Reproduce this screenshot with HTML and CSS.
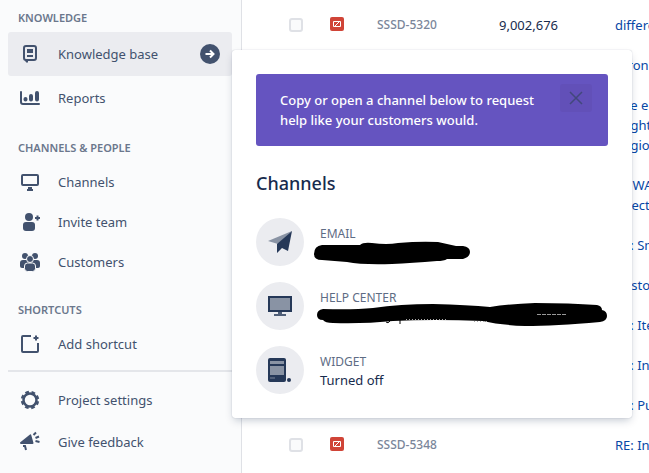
FILE: index.html
```html
<!DOCTYPE html>
<html lang="en">
<head>
    <meta charset="UTF-8">
    <meta name="viewport" content="width=device-width, initial-scale=1.0">
    <title>Channels</title>
    <link rel="stylesheet" href="styles.css">
</head>
<body>
    <div class="app">
        <nav class="sidebar">
            <h2 class="nav-title">Knowledge</h2>
            <ul class="nav-list nav-list-tall">
                <li>
                    <a class="nav-item selected" href="#">
                        <svg class="nav-icon" viewBox="0 0 24 24" fill="none" stroke="currentColor" stroke-width="2"><rect x="6" y="4" width="12" height="14" rx="2"/><path d="M9 7h6v4H9z" fill="currentColor" stroke="none"/><path d="M9 14h6"/><path d="M7 18h3v2l-1 1-2-2z" fill="currentColor" stroke="none"/></svg>
                        <span class="nav-label">Knowledge base</span>
                        <svg class="nav-arrow" viewBox="0 0 20 20"><circle cx="10" cy="10" r="10" fill="currentColor"/><path d="M5.500 10h8M10 6.500l3.500 3.500-3.500 3.500" fill="none" stroke="#fff" stroke-width="2"/></svg>
                    </a>
                </li>
                <li>
                    <a class="nav-item" href="#">
                        <svg class="nav-icon" viewBox="0 0 24 24" fill="none" stroke="currentColor" stroke-width="2" stroke-linecap="round"><path d="M3 6v10q0 2 2 2h16"/><path d="M7.500 13v.5M13 10v3.500M19 7v6.500" stroke-width="4"/></svg>
                        <span class="nav-label">Reports</span>
                    </a>
                </li>
            </ul>

            <h2 class="nav-title">Channels &amp; people</h2>
            <ul class="nav-list">
                <li>
                    <a class="nav-item" href="#">
                        <svg class="nav-icon" viewBox="0 0 24 24" fill="none" stroke="currentColor" stroke-width="2"><rect x="4" y="5" width="16" height="10" rx="1"/><path d="M12 17v3" stroke-width="4"/><path d="M9 20h6"/></svg>
                        <span class="nav-label">Channels</span>
                    </a>
                </li>
                <li>
                    <a class="nav-item" href="#">
                        <svg class="nav-icon" viewBox="0 0 24 24" fill="currentColor"><circle cx="11" cy="7" r="4"/><path d="M5 15q0-3 3-3h6q3 0 3 3v3q0 3-3 3H8q-3 0-3-3z"/><path d="M19.500 5.500v5M17 8h5" stroke="currentColor" stroke-width="2"/></svg>
                        <span class="nav-label">Invite team</span>
                    </a>
                </li>
                <li>
                    <a class="nav-item" href="#">
                        <svg class="nav-icon" viewBox="0 0 24 24" fill="currentColor"><circle cx="7" cy="6" r="3"/><circle cx="17" cy="6" r="3"/><path d="M2 13q0-3 3-3h14q3 0 3 3v3q0 2-2 2H4q-2 0-2-2z"/><g stroke="#fafbfc"><circle cx="12" cy="9" r="3.500"/><path d="M6.500 16q0-3 3-3h5q3 0 3 3v2.500q0 3-3 3h-5q-3 0-3-3z"/></g></svg>
                        <span class="nav-label">Customers</span>
                    </a>
                </li>
            </ul>

            <h2 class="nav-title">Shortcuts</h2>
            <ul class="nav-list">
                <li>
                    <a class="nav-item" href="#">
                        <svg class="nav-icon" viewBox="0 0 24 24" fill="none" stroke="currentColor" stroke-width="2"><path d="M13 4H5q-1 0-1 1v14q0 1 1 1h14q1 0 1-1v-8"/><path d="M18 3.500v5M15.500 6h5"/></svg>
                        <span class="nav-label">Add shortcut</span>
                    </a>
                </li>
            </ul>

            <ul class="nav-list nav-footer">
                <li>
                    <a class="nav-item" href="#">
                        <svg class="nav-icon" viewBox="0 0 24 24" fill="none" stroke="currentColor"><circle cx="12" cy="12" r="6.500" stroke-width="2.500"/><circle cx="12" cy="12" r="8" stroke-width="2.500" stroke-dasharray="3.600 2.683" stroke-dashoffset="-1.340"/></svg>
                        <span class="nav-label">Project settings</span>
                    </a>
                </li>
                <li>
                    <a class="nav-item" href="#">
                        <svg class="nav-icon" viewBox="0 0 24 24" fill="currentColor"><path d="M2 12.500 12 4.500q1-.5 1.300.7L15.500 13q0 1-1 1H3q-1 0-1-1.500z"/><path d="M5 16h2l1 4M15.500 5l2.500-2.500M17.500 8l3.500-1.500M17.500 11l4 1" fill="none" stroke="currentColor" stroke-width="2"/></svg>
                        <span class="nav-label">Give feedback</span>
                    </a>
                </li>
            </ul>
        </nav>

        <main class="queue">
            <table class="issues">
                <tbody>
                    <tr>
                        <td class="col-check"><input type="checkbox" aria-label="Select SSSD-5320"></td>
                        <td class="col-type"><svg class="type-icon" viewBox="0 0 14 14"><rect width="14" height="14" rx="2" fill="#d04437"/><path d="M3.500 4.500h7v5h-7zM5 9l4-4" fill="none" stroke="#fff"/></svg></td>
                        <td class="col-key">SSSD-5320</td>
                        <td class="col-number">9,002,676</td>
                        <td class="col-summary"><a href="#">differe</a></td>
                    </tr>
                    <tr><td colspan="4"></td><td class="col-summary"><a href="#">Erron</a></td></tr>
                    <tr><td colspan="4"></td><td class="col-summary"><a href="#">The e<br>might<br>Region</a></td></tr>
                    <tr><td colspan="4"></td><td class="col-summary"><a href="#">To WA<br>direct</a></td></tr>
                    <tr><td colspan="4"></td><td class="col-summary"><a href="#">RE: Sm</a></td></tr>
                    <tr><td colspan="4"></td><td class="col-summary"><a href="#">Custo</a></td></tr>
                    <tr><td colspan="4"></td><td class="col-summary"><a href="#">RE: Ite</a></td></tr>
                    <tr><td colspan="4"></td><td class="col-summary"><a href="#">RE: In</a></td></tr>
                    <tr><td colspan="4"></td><td class="col-summary"><a href="#">RE: Pu</a></td></tr>
                    <tr>
                        <td class="col-check"><input type="checkbox" aria-label="Select SSSD-5348"></td>
                        <td class="col-type"><svg class="type-icon" viewBox="0 0 14 14"><rect width="14" height="14" rx="2" fill="#d04437"/><path d="M3.500 4.500h7v5h-7zM5 9l4-4" fill="none" stroke="#fff"/></svg></td>
                        <td class="col-key">SSSD-5348</td>
                        <td class="col-number"></td>
                        <td class="col-summary"><a href="#">RE: In</a></td>
                    </tr>
                </tbody>
            </table>
        </main>

        <section class="popup" role="dialog" aria-labelledby="popup-title">
            <div class="banner">
                <p>Copy or open a channel below to request help like your customers would.</p>
                <button class="close" type="button" aria-label="Close">
                    <svg viewBox="0 0 14 14"><path d="M1 1l12 12M13 1L1 13" stroke="currentColor" stroke-width="1.500"/></svg>
                </button>
            </div>
            <h1 class="popup-title" id="popup-title">Channels</h1>
            <ul class="channels">
                <li class="channel">
                    <svg class="channel-icon" viewBox="0 0 48 48"><circle cx="24" cy="24" r="24" fill="#ebecf0"/><path d="M12 23l24-10-14 13z" fill="#8993a4"/><path d="M36 13l-4 20-6-3-5 5v-9z" fill="#253858"/></svg>
                    <div class="channel-text">
                        <h3>Email</h3>
                        <svg class="redacted" viewBox="0 0 300 28"><path d="M2 16q0-8 8-9h38q3-3 12-2 15 2 26 0 22-2 40-1l18 4h7q7 1 7 6t-7 7h-16q-3 2-10 2-25 2-45 3-30 1-45-2l-25-2q-8 0-8-6z"/></svg>
                    </div>
                </li>
                <li class="channel">
                    <svg class="channel-icon" viewBox="0 0 48 48"><circle cx="24" cy="24" r="24" fill="#ebecf0"/><path d="M13 15h22v14H13z" fill="#8993a4" stroke="#253858" stroke-width="2"/><path d="M22 30h4v2h4v2H18v-2h4z" fill="#505f79"/></svg>
                    <div class="channel-text">
                        <h3>Help center</h3>
                        <svg class="redacted" viewBox="0 0 300 28"><path d="M5 13q0-5 6-6 30 1 50-1 27-4 60-4 35 1 57 3 20-3 45-4 35 0 62 2 5 1 5 5 5 1 5 6 0 5-7 6-45 4-75 4-25-1-42-5-50-2-90 0-30 3-60 2-8 0-10-3-6 0-6-5z"/><path d="M74 20q2 2 4-1M88 18v4" fill="none" stroke="#000"/><path d="M94 17.500h42M162 19.500h14" fill="none" stroke="#aaa" stroke-dasharray="1 2"/><path d="M225 12.500h30" stroke="#999" stroke-dasharray="4 1"/></svg>
                    </div>
                </li>
                <li class="channel">
                    <svg class="channel-icon" viewBox="0 0 48 48"><circle cx="24" cy="24" r="24" fill="#ebecf0"/><rect x="12" y="12" width="18" height="24" rx="2" fill="#253858"/><path d="M14 15h14v3H14zM14 20h14v9H14z" fill="#8993a4"/><path d="M14 31h5v2h-5z" fill="#505f79"/><circle cx="33" cy="34" r="2" fill="#253858"/></svg>
                    <div class="channel-text">
                        <h3>Widget</h3>
                        <p>Turned off</p>
                    </div>
                </li>
            </ul>
        </section>
    </div>
</body>
</html>
```
FILE: styles.css
```css
* {
    box-sizing: border-box;
}

body {
    margin: 0;
    background-color: #fff;
    color: #172b4d;
    font-family: 'Noto Sans', sans-serif;
    font-size: 13px;
    line-height: 20px;
}

h1, h2, h3, p, ul {
    margin: 0;
    padding: 0;
}

ul {
    list-style: none;
}

a {
    color: #0747a6;
    text-decoration: none;
}

.app {
    position: relative;
    display: flex;
    height: 100vh;
    overflow: hidden;
}

/* Sidebar */
.sidebar {
    flex: 0 0 242px;
    padding: 8px 9px 8px 8px;
    background-color: #fafbfc;
    border-right: 1px solid #dfe1e6;
}

.nav-title {
    padding: 0 10px;
    margin-bottom: 4px;
    color: #6b778c;
    font-size: 11px;
    font-weight: 600;
    text-transform: uppercase;
}

.nav-list + .nav-title {
    margin-top: 18px;
}

.nav-item {
    display: flex;
    align-items: center;
    gap: 16px;
    height: 40px;
    padding: 0 12px 0 10px;
    border-radius: 3px;
    color: #42526e;
}

.nav-list-tall .nav-item {
    height: 44px;
}

.nav-item.selected {
    background-color: #ebecf0;
}

.nav-icon {
    width: 24px;
    height: 24px;
}

.nav-label {
    flex: 1;
}

.nav-arrow {
    width: 20px;
    height: 20px;
}

.nav-footer {
    margin-top: 6px;
    padding-top: 7px;
    border-top: 2px solid #e4e6ea;
}

.nav-footer .nav-item {
    height: 42px;
}

/* Issue list */
.queue {
    flex: 1;
    min-width: 0;
    padding-top: 5px;
}

.issues {
    width: 440px;
    table-layout: fixed;
    border-collapse: collapse;
}

.issues td {
    height: 40px;
    padding: 10px 0;
    vertical-align: top;
}

.issues .col-check {
    width: 88px;
    padding-left: 47px;
}

.issues .col-type {
    width: 47px;
}

.col-key {
    width: 122px;
    color: #7a869a;
    font-size: 12px;
    font-weight: 500;
}

.col-number {
    width: 116px;
}

.col-summary {
    white-space: nowrap;
}

.col-check input {
    appearance: none;
    display: block;
    width: 14px;
    height: 14px;
    margin: 3px 0;
    border: 2px solid #dfe1e6;
    border-radius: 3px;
    background-color: #fafbfc;
}

.type-icon {
    display: block;
    width: 14px;
    height: 14px;
    margin-top: 2px;
}

/* Channels popup */
.popup {
    position: absolute;
    top: 50px;
    left: 232px;
    width: 400px;
    padding: 24px;
    border-radius: 3px;
    background-color: #fff;
    box-shadow: 0 4px 8px -2px rgba(9, 30, 66, 0.25), 0 0 1px rgba(9, 30, 66, 0.31);
}

.banner {
    display: flex;
    justify-content: space-between;
    align-items: flex-start;
    gap: 16px;
    padding: 16px 16px 16px 24px;
    border-radius: 3px;
    background-color: #6554c0;
    color: #fff;
}

.banner p {
    max-width: 264px;
    font-weight: 500;
}

.close {
    display: flex;
    align-items: center;
    justify-content: center;
    width: 32px;
    height: 28px;
    margin-top: -6px;
    padding: 0;
    border: 0;
    border-radius: 3px;
    background-color: #6250b8;
    color: #42487c;
}

.close svg {
    width: 14px;
    height: 14px;
}

.popup-title {
    margin: 25px 0 23px;
    font-size: 18px;
    font-weight: 500;
    line-height: 24px;
}

.channels {
    display: flex;
    flex-direction: column;
    gap: 16px;
}

.channel {
    display: flex;
    align-items: center;
    gap: 16px;
}

.channel-icon {
    width: 48px;
    height: 48px;
}

.channel-text {
    position: relative;
    flex: 1;
    height: 40px;
    padding-top: 4px;
}

.channel h3 {
    color: #5e6c84;
    font-size: 12px;
    font-weight: 400;
    line-height: 16px;
    text-transform: uppercase;
}

/* Marker strokes over the addresses */
.redacted {
    position: absolute;
    top: 16px;
    left: -8px;
    width: 300px;
    height: 28px;
}
```
